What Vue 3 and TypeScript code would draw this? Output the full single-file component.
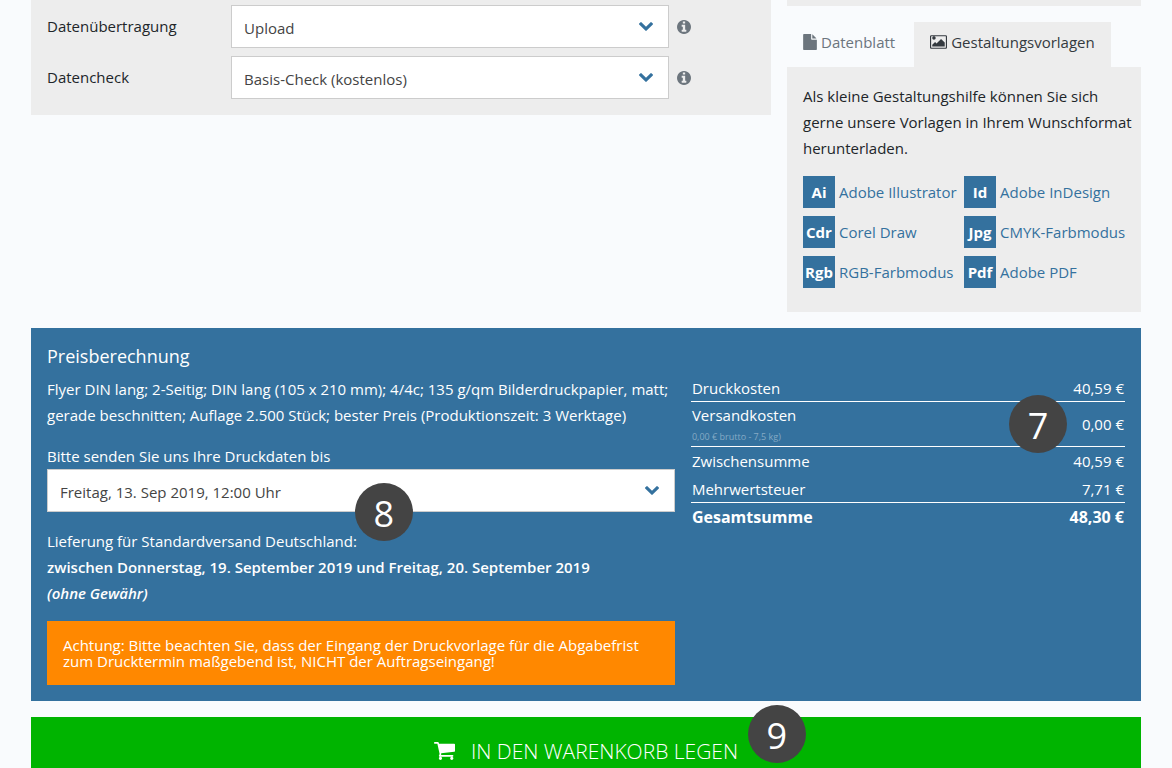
<script setup lang="ts">
import { ref } from 'vue'

interface Option { id: string; label: string; values: string[] }
interface Template { tag: string; name: string }
interface Cost { label: string; note?: string; amount: string; kind?: string }

const options: Option[] = [
  { id: 'transfer', label: 'Datenübertragung', values: ['Upload'] },
  { id: 'check', label: 'Datencheck', values: ['Basis-Check (kostenlos)'] },
]

const templates: Template[] = [
  { tag: 'Ai', name: 'Adobe Illustrator' },
  { tag: 'Id', name: 'Adobe InDesign' },
  { tag: 'Cdr', name: 'Corel Draw' },
  { tag: 'Jpg', name: 'CMYK-Farbmodus' },
  { tag: 'Rgb', name: 'RGB-Farbmodus' },
  { tag: 'Pdf', name: 'Adobe PDF' },
]

const costs: Cost[] = [
  { label: 'Druckkosten', amount: '40,59 €', kind: 'ruled print' },
  { label: 'Versandkosten', note: '0,00 € brutto - 7,5 kg)', amount: '0,00 €', kind: 'ruled shipping' },
  { label: 'Zwischensumme', amount: '40,59 €' },
  { label: 'Mehrwertsteuer', amount: '7,71 €', kind: 'ruled' },
  { label: 'Gesamtsumme', amount: '48,30 €', kind: 'total' },
]

const deadline = ref('Freitag, 13. Sep 2019, 12:00 Uhr')
const chevron =
  'M1683 808l-742 741q-19 19-45 19t-45-19l-742-741q-19-19-19-45.5t19-45.5l166-165q19-19 45-19t45 19l531 531 531-531q19-19 45-19t45 19l166 165q19 19 19 45.5t-19 45.5z'
</script>

<template>
  <main class="page">
    <div class="top">
      <section class="options">
        <div v-for="o in options" :key="o.id" class="option">
          <label :for="o.id">{{ o.label }}</label>
          <div class="select">
            <select :id="o.id">
              <option v-for="v in o.values" :key="v">{{ v }}</option>
            </select>
            <svg class="chevron" viewBox="90 533 1612 1035" aria-hidden="true"><path :d="chevron" /></svg>
          </div>
          <button class="info" type="button" :aria-label="'Info: ' + o.label">
            <svg viewBox="128 128 1536 1536" aria-hidden="true">
              <path d="M1152 1376v-160q0-14-9-23t-23-9h-96v-512q0-14-9-23t-23-9h-320q-14 0-23 9t-9 23v160q0 14 9 23t23 9h96v320h-96q-14 0-23 9t-9 23v160q0 14 9 23t23 9h448q14 0 23-9t9-23zm-128-896v-160q0-14-9-23t-23-9h-192q-14 0-23 9t-9 23v160q0 14 9 23t23 9h192q14 0 23-9t9-23zm640 416q0 209-103 385.5t-279.5 279.5-385.5 103-385.5-103-279.5-279.5-103-385.5 103-385.5 279.5-279.5 385.5-103 385.5 103 279.5 279.5 103 385.5z" />
            </svg>
          </button>
        </div>
      </section>

      <aside class="side">
        <div class="strip"></div>
        <div class="tabs" role="tablist">
          <button class="tab" type="button" role="tab" aria-selected="false">
            <svg class="file" viewBox="128 0 1536 1792" aria-hidden="true">
              <path d="M1152 512v-472q22 14 36 28l408 408q14 14 28 36h-472zm-128 32q0 40 28 68t68 28h544v1056q0 40-28 68t-68 28h-1344q-40 0-68-28t-28-68v-1600q0-40 28-68t68-28h800v544z" />
            </svg>
            <span>Datenblatt</span>
          </button>
          <button class="tab active" type="button" role="tab" aria-selected="true">
            <svg class="image" viewBox="64 128 1920 1536" aria-hidden="true">
              <path d="M704 448q0 80-56 136t-136 56-136-56-56-136 56-136 136-56 136 56 56 136zm1024 512v448h-1408v-192l320-320 160 160 512-512zm96-704h-1600q-13 0-22.5 9.5t-9.5 22.5v1216q0 13 9.5 22.5t22.5 9.5h1600q13 0 22.5-9.5t9.5-22.5v-1216q0-13-9.5-22.5t-22.5-9.5zm160 32v1216q0 66-47 113t-113 47h-1600q-66 0-113-47t-47-113v-1216q0-66 47-113t113-47h1600q66 0 113 47t47 113z" />
            </svg>
            <span>Gestaltungsvorlagen</span>
          </button>
        </div>
        <div class="sheet" role="tabpanel">
          <p>Als kleine Gestaltungshilfe können Sie sich gerne unsere Vorlagen in Ihrem Wunschformat herunterladen.</p>
          <div class="templates">
            <a v-for="t in templates" :key="t.tag" class="template" href="#">
              <b>{{ t.tag }}</b><span>{{ t.name }}</span>
            </a>
          </div>
        </div>
      </aside>
    </div>

    <section class="price">
      <h2>Preisberechnung</h2>
      <div class="columns">
        <div class="details">
          <p>Flyer DIN lang; 2-Seitig; DIN lang (105 x 210 mm); 4/4c; 135 g/qm Bilderdruckpapier, matt;
            gerade beschnitten; Auflage 2.500 Stück; bester Preis (Produktionszeit: 3 Werktage)</p>
          <label class="deadline" for="deadline">Bitte senden Sie uns Ihre Druckdaten bis</label>
          <div class="select">
            <select id="deadline" v-model="deadline">
              <option>Freitag, 13. Sep 2019, 12:00 Uhr</option>
            </select>
            <svg class="chevron" viewBox="90 533 1612 1035" aria-hidden="true"><path :d="chevron" /></svg>
            <span class="badge badge-date">8</span>
          </div>
          <p class="delivery">
            Lieferung für Standardversand Deutschland:<br />
            <strong>zwischen Donnerstag, 19. September 2019 und Freitag, 20. September 2019<br />
              <em>(ohne Gewähr)</em></strong>
          </p>
          <div class="notice">
            Achtung: Bitte beachten Sie, dass der Eingang der Druckvorlage für die Abgabefrist
            zum Drucktermin maßgebend ist, NICHT der Auftragseingang!
          </div>
        </div>
        <div class="costs">
          <table>
            <tbody>
              <tr v-for="c in costs" :key="c.label" :class="c.kind">
                <th scope="row">{{ c.label }}<small v-if="c.note">{{ c.note }}</small></th>
                <td>{{ c.amount }}</td>
              </tr>
            </tbody>
          </table>
          <span class="badge badge-cost">7</span>
        </div>
      </div>
    </section>

    <div class="order">
      <button class="cart" type="button">
        <svg viewBox="64 256 1664 1408" aria-hidden="true">
          <path d="M704 1536q0 52-38 90t-90 38-90-38-38-90 38-90 90-38 90 38 38 90zm896 0q0 52-38 90t-90 38-90-38-38-90 38-90 90-38 90 38 38 90zm128-1088v512q0 24-16.5 42.5t-40.5 21.5l-1044 122q13 60 13 70 0 16-24 64h920q26 0 45 19t19 45-19 45-45 19h-1024q-26 0-45-19t-19-45q0-11 8-31.5t16-36 21.5-40 15.5-29.5l-177-823h-204q-26 0-45-19t-19-45 19-45 45-19h256q16 0 28.5 6.5t19.5 15.5 13 24.5 8 26 5.5 29.5 4.5 26h1201q26 0 45 19t19 45z" />
        </svg>
        <span>IN DEN WARENKORB LEGEN</span>
      </button>
      <span class="badge badge-order">9</span>
    </div>
  </main>
</template>

<style>
body {
  margin: 0;
  background: #f9fbfd;
}
</style>

<style scoped>
.page {
  box-sizing: border-box;
  height: 100vh;
  overflow: hidden;
  padding: 0 31px;
  background: #f9fbfd;
  color: #212529;
  font: 400 15px/26px "Open Sans", "Noto Sans", sans-serif;
}
button,
select {
  font: inherit;
  border: 0;
  border-radius: 0;
  background: none;
  padding: 0;
  margin: 0;
}
p,
h2 {
  margin: 0;
}
svg {
  display: block;
  flex: none;
  fill: currentColor;
}
.top {
  display: flex;
  align-items: flex-start;
  gap: 16px;
  margin-bottom: 16px;
}
.options {
  box-sizing: border-box;
  flex: none;
  width: calc(100% * 2 / 3);
  display: grid;
  gap: 8px;
  padding: 5px 16px 16px;
  background: #ededed;
}
.option {
  display: grid;
  grid-template-columns: 26% 61.8% auto;
  align-items: center;
}
.option label {
  padding-bottom: 2px;
}
.select {
  position: relative;
}
select {
  display: block;
  box-sizing: border-box;
  width: 100%;
  height: 43px;
  padding: 2px 40px 0 12px;
  border: 1px solid #ccc;
  background: #fff;
  color: #444;
  appearance: none;
}
.chevron {
  position: absolute;
  top: 17px;
  right: 16px;
  width: 14px;
  height: 9px;
  color: #34719e;
  pointer-events: none;
}
.info {
  width: 14px;
  margin-left: 8px;
  color: #6c757d;
}
.side {
  flex: 1;
  min-width: 0;
}
.strip {
  height: 6px;
  margin-bottom: 16px;
  background: #ededed;
}
.tabs {
  display: flex;
  gap: 3px;
}
.tab {
  display: flex;
  align-items: center;
  gap: 4px;
  height: 45px;
  padding: 0 16px 5px;
  color: #6c757d;
}
.tab.active {
  background: #ededed;
  color: #343a40;
}
.file {
  width: 14px;
  height: 16px;
}
.image {
  width: 17px;
  height: 14px;
}
.sheet {
  padding: 16px 8px 24px 16px;
  background: #ededed;
}
.templates {
  display: grid;
  grid-template-columns: repeat(2, minmax(0, 1fr));
  gap: 8px 0;
  margin: 15px 8px 0 0;
}
.template {
  display: flex;
  align-items: center;
  gap: 4px;
  color: #34719e;
  text-decoration: none;
  white-space: nowrap;
}
.template b {
  flex: none;
  width: 32px;
  line-height: 32px;
  background: #34719e;
  color: #fff;
  text-align: center;
}
.price {
  padding: 16px;
  margin-bottom: 16px;
  background: #34719e;
  color: #fff;
}
h2 {
  margin-bottom: 8px;
  font-size: 18px;
  line-height: 24px;
  font-weight: 400;
}
.columns {
  display: flex;
  align-items: flex-start;
  gap: 16px;
}
.details {
  flex: none;
  width: 58.25%;
}
.deadline {
  display: block;
  margin-top: 16px;
  line-height: 25px;
}
.delivery {
  margin: 16px 0 15px;
}
.delivery strong {
  font-weight: 600;
}
.notice {
  padding: 16px;
  background: #ff8800;
  line-height: 16px;
}
.costs {
  position: relative;
  flex: 1;
}
table {
  width: 100%;
  border-spacing: 0;
}
th,
td {
  box-sizing: border-box;
  height: 28px;
  padding: 0 1px;
  font-weight: 400;
  line-height: 24px;
  text-align: left;
}
td {
  text-align: right;
}
.print th,
.print td {
  height: 26px;
  padding-bottom: 2px;
  line-height: 22px;
}
.shipping th {
  height: 45px;
}
.ruled th,
.ruled td {
  border-bottom: 1px solid #fff;
}
small {
  display: block;
  padding-top: 2px;
  color: #85aac5;
  font-size: 9px;
  line-height: 16px;
}
.total th,
.total td {
  font-size: 16px;
  font-weight: 700;
}
.order {
  position: relative;
}
.cart {
  display: flex;
  align-items: center;
  justify-content: center;
  gap: 16px;
  width: 100%;
  height: 68px;
  background: #00b400;
  color: #fff;
  font-size: 21px;
}
.cart span {
  font-weight: 300;
}
.cart svg {
  width: 21px;
  height: 18px;
}
.badge {
  position: absolute;
  box-sizing: border-box;
  width: 58px;
  height: 58px;
  padding-top: 4px;
  border-radius: 50%;
  background: #444;
  color: #fff;
  font-size: 36px;
  line-height: 54px;
  text-align: center;
}
.badge-cost {
  top: 19px;
  right: 58px;
}
.badge-date {
  top: 14px;
  left: 49%;
}
.badge-order {
  top: -12px;
  right: 30.2%;
}
</style>
